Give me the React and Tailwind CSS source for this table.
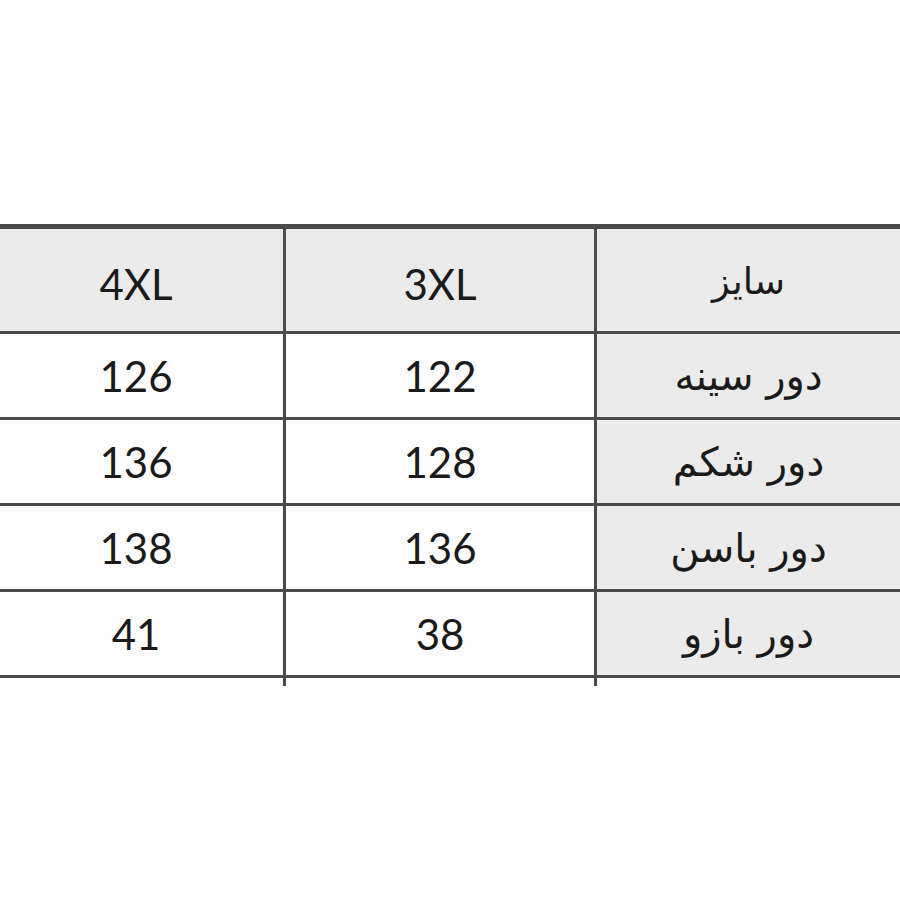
export default function App() {
  const rows = [
    ["126", "122", "دور سینه"],
    ["136", "128", "دور شکم"],
    ["138", "136", "دور باسن"],
    ["41", "38", "دور بازو"],
  ];
  const latin = { fontFamily: "Lato, 'Open Sans', sans-serif" };
  const arabic = { fontFamily: "'DejaVu Sans', sans-serif" };
  return (
    <div className="w-[900px] h-[900px] bg-white pt-[224px] text-[#1a1a1a]">
      <div className="border-t-[5px] border-[#4a4a4a]">
        <div className="grid grid-cols-[286px_311px_1fr] h-[105px] border-b-[3px] border-[#4a4a4a] bg-[#ebebeb]">
          <div className="border-r-[3px] border-[#4a4a4a] flex items-center justify-center pr-[11px] pt-[8px] text-[42px]" style={latin}>4XL</div>
          <div className="border-r-[3px] border-[#4a4a4a] flex items-center justify-center pt-[8px] text-[42px]" style={latin}>3XL</div>
          <div className="flex items-center justify-center pt-[4px] text-[37px]" style={arabic} dir="rtl">سایز</div>
        </div>
        {rows.map((r, i) => (
          <div key={i} className="grid grid-cols-[286px_311px_1fr] h-[86px] border-b-[3px] border-[#4a4a4a]">
            <div className="border-r-[3px] border-[#4a4a4a] bg-[#fdfdfd] flex items-center justify-center pr-[11px] pt-[2px] text-[42px]" style={latin}>{r[0]}</div>
            <div className="border-r-[3px] border-[#4a4a4a] bg-[#fdfdfd] flex items-center justify-center pt-[2px] text-[42px]" style={latin}>{r[1]}</div>
            <div className="bg-[#ebebeb] flex items-center justify-center text-[40px]" style={arabic} dir="rtl">{r[2]}</div>
          </div>
        ))}
        <div className="grid grid-cols-[286px_311px_1fr] h-[8px]">
          <div className="border-r-[3px] border-[#4a4a4a]"></div>
          <div className="border-r-[3px] border-[#4a4a4a]"></div>
          <div></div>
        </div>
      </div>
    </div>
  );
}
